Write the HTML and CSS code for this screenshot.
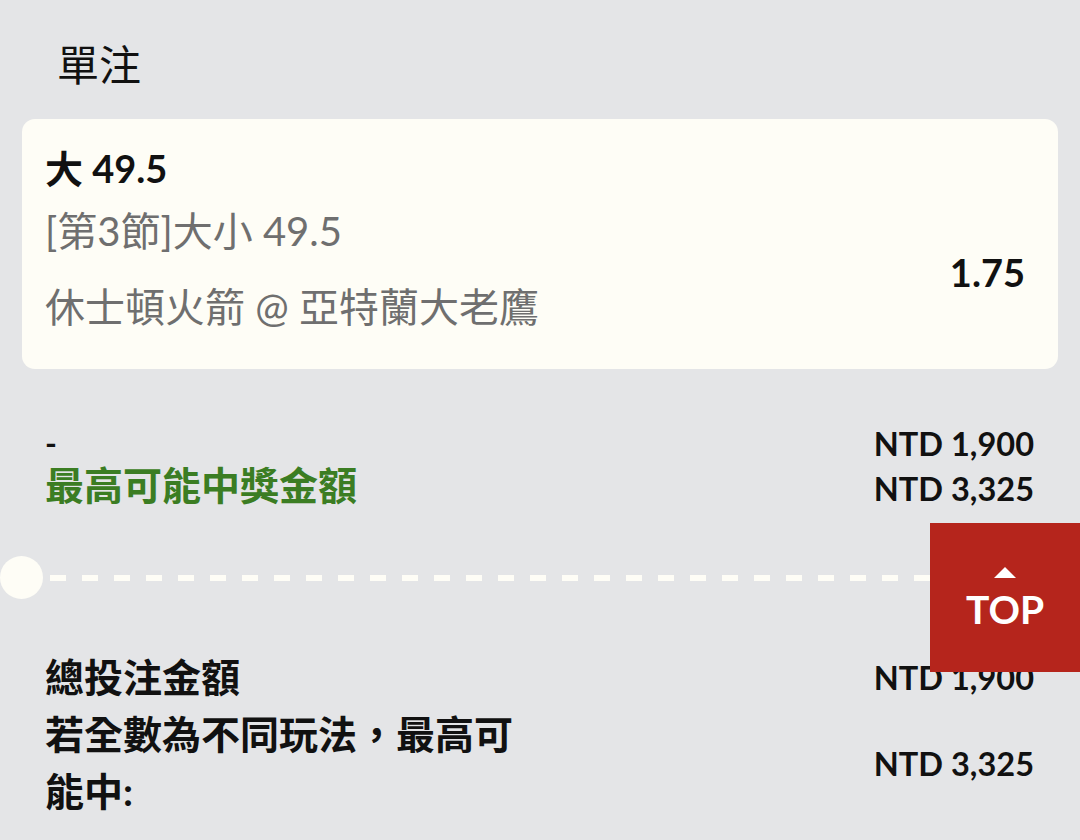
FILE: index.html
```html
<!DOCTYPE html>
<html lang="zh-Hant">
<head>
<meta charset="utf-8">
<link rel="stylesheet" href="styles.css">
</head>
<body>
<div class="page">
  <h1 class="title">單注</h1>
  <section class="card">
    <div class="card-info">
      <div class="pick">大 49.5</div>
      <div class="market">[第3節]大小 49.5</div>
      <div class="match">休士頓火箭 @ 亞特蘭大老鷹</div>
    </div>
    <div class="odds">1.75</div>
  </section>
  <section class="stake">
    <div class="stake-left">
      <div class="dash">-</div>
      <div class="win-label">最高可能中獎金額</div>
    </div>
    <div class="stake-right">
      <div>NTD 1,900</div>
      <div>NTD 3,325</div>
    </div>
  </section>
  <div class="divider">
    <span class="dot"></span>
    <span class="line"></span>
  </div>
  <section class="summary">
    <div class="sum-label">總投注金額</div>
    <div class="sum-value">NTD 1,900</div>
    <div class="sum-label wrap">若全數為不同玩法，最高可能中:</div>
    <div class="sum-value mid">NTD 3,325</div>
  </section>
</div>
<a class="top-btn" href="#">
  <span class="tri"></span>
  <span class="top-text">TOP</span>
</a>
</body>
</html>
```
FILE: styles.css
```css
html, body {
  margin: 0;
  padding: 0;
}
body {
  background: #e4e5e7;
  font-family: Lato, "Noto Sans CJK TC", sans-serif;
  color: #111;
  width: 1080px;
  height: 840px;
  overflow: hidden;
  position: relative;
}
.page {
  display: flex;
  flex-direction: column;
}
.title {
  margin: 0;
  padding: 34px 0 0 57px;
  height: 119px;
  box-sizing: border-box;
  font-size: 42px;
  font-weight: 400;
  line-height: 62px;
}
.card {
  margin: 0 22px;
  height: 250px;
  box-sizing: border-box;
  background: #fefdf6;
  border-radius: 13px;
  display: flex;
  align-items: center;
  justify-content: space-between;
  padding: 0 33px 0 23px;
}
.card-info {
  display: flex;
  flex-direction: column;
  font-size: 40px;
}
.pick {
  font-size: 38px;
  font-weight: 700;
  color: #111;
  line-height: 60px;
}
.market {
  color: #6f6f6f;
  line-height: 66px;
}
.match {
  color: #6f6f6f;
  line-height: 86px;
}
.odds {
  font-size: 38px;
  font-weight: 700;
  margin-top: 56px;
}
.stake {
  display: flex;
  justify-content: space-between;
  padding: 52px 46px 0 45px;
}
.stake-left {
  font-size: 39px;
  font-weight: 700;
}
.dash {
  font-size: 32px;
  line-height: 44px;
}
.win-label {
  color: #3b7d23;
  line-height: 40px;
}
.stake-right {
  font-size: 32.5px;
  font-weight: 700;
  line-height: 45px;
  text-align: right;
}
.divider {
  display: flex;
  align-items: center;
  margin-top: 45px;
  height: 43px;
}
.dot {
  width: 43px;
  height: 43px;
  border-radius: 50%;
  background: #fefdf6;
  flex: none;
}
.line {
  flex: 1;
  height: 6px;
  margin-left: 7px;
  background: repeating-linear-gradient(to right, #fefdf6 0 16px, transparent 16px 32px);
}
.summary {
  display: grid;
  grid-template-columns: 480px 1fr;
  padding: 50px 46px 0 45px;
  row-gap: 0;
}
.sum-label {
  font-size: 39px;
  font-weight: 700;
  line-height: 57px;
}
.sum-label.wrap {
  width: 480px;
}
.sum-value {
  font-size: 32.5px;
  font-weight: 700;
  line-height: 57px;
  text-align: right;
}
.sum-value.mid {
  align-self: center;
}
.top-btn {
  position: absolute;
  left: 930px;
  top: 523px;
  width: 150px;
  height: 149px;
  background: #b5251c;
  color: #fff;
  text-decoration: none;
  display: flex;
  flex-direction: column;
  align-items: center;
  padding-top: 44px;
  box-sizing: border-box;
}
.tri {
  width: 0;
  height: 0;
  border-left: 11px solid transparent;
  border-right: 11px solid transparent;
  border-bottom: 11px solid #fff;
}
.top-text {
  font-size: 39px;
  font-weight: 700;
  line-height: 52px;
  margin-top: 5px;
}
```
